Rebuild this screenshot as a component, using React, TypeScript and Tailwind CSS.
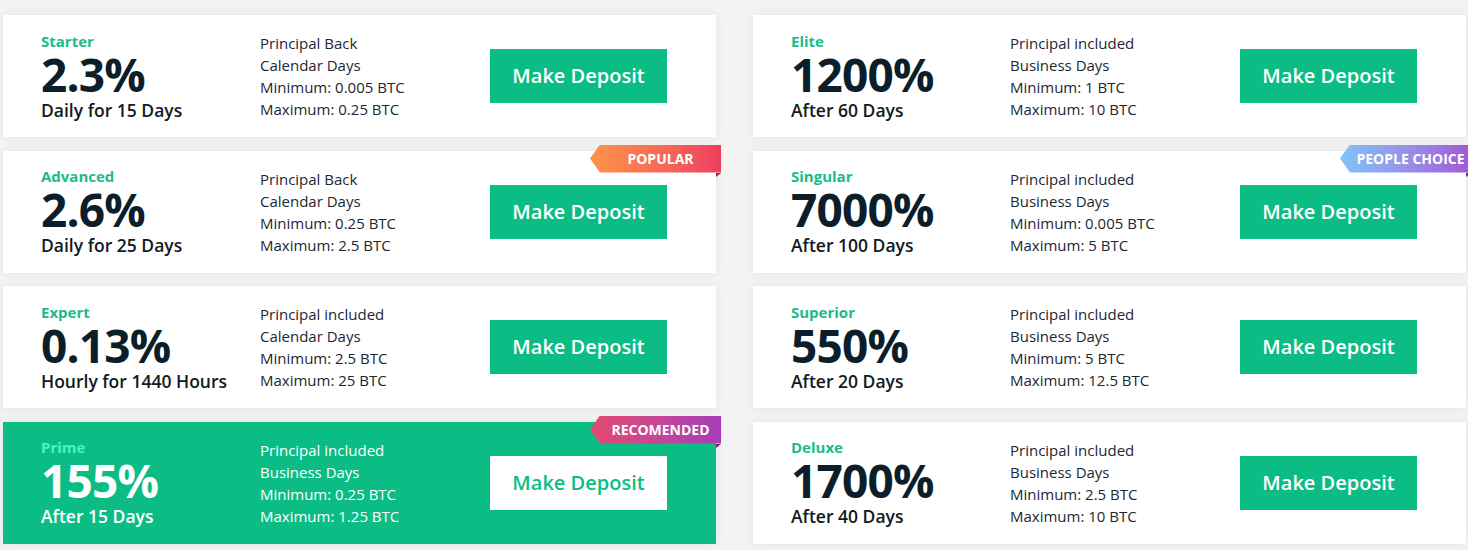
type Plan = {
  name: string;
  rate: string;
  term: string;
  principal: string;
  days: string;
  min: string;
  max: string;
  featured?: boolean;
  ribbon?: 'popular' | 'people' | 'recommended';
};

const LEFT: Plan[] = [
  { name: 'Starter', rate: '2.3%', term: 'Daily for 15 Days', principal: 'Principal Back', days: 'Calendar Days', min: '0.005 BTC', max: '0.25 BTC' },
  { name: 'Advanced', rate: '2.6%', term: 'Daily for 25 Days', principal: 'Principal Back', days: 'Calendar Days', min: '0.25 BTC', max: '2.5 BTC', ribbon: 'popular' },
  { name: 'Expert', rate: '0.13%', term: 'Hourly for 1440 Hours', principal: 'Principal included', days: 'Calendar Days', min: '2.5 BTC', max: '25 BTC' },
  { name: 'Prime', rate: '155%', term: 'After 15 Days', principal: 'Principal included', days: 'Business Days', min: '0.25 BTC', max: '1.25 BTC', featured: true, ribbon: 'recommended' },
];

const RIGHT: Plan[] = [
  { name: 'Elite', rate: '1200%', term: 'After 60 Days', principal: 'Principal included', days: 'Business Days', min: '1 BTC', max: '10 BTC' },
  { name: 'Singular', rate: '7000%', term: 'After 100 Days', principal: 'Principal included', days: 'Business Days', min: '0.005 BTC', max: '5 BTC', ribbon: 'people' },
  { name: 'Superior', rate: '550%', term: 'After 20 Days', principal: 'Principal included', days: 'Business Days', min: '5 BTC', max: '12.5 BTC' },
  { name: 'Deluxe', rate: '1700%', term: 'After 40 Days', principal: 'Principal included', days: 'Business Days', min: '2.5 BTC', max: '10 BTC' },
];

const RIBBON = {
  popular: { label: 'POPULAR', body: 'bg-gradient-to-r from-[#fd9447] to-[#ee3d5f]', fold: 'border-t-[#a3243c]' },
  people: { label: 'PEOPLE CHOICE', body: 'bg-gradient-to-r from-[#7cc5f6] to-[#a156d8]', fold: 'border-t-[#6c2f9a]' },
  recommended: { label: 'RECOMENDED', body: 'bg-gradient-to-r from-[#e4486c] to-[#a83bb8]', fold: 'border-t-[#7a1f6f]' },
};

function Ribbon({ kind }: { kind: keyof typeof RIBBON }) {
  const r = RIBBON[kind];
  return (
    <div className="absolute -right-[5px] -top-[6px]">
      <div
        className={
          'flex h-[28px] w-[131px] items-center justify-center pl-[10px] pb-px text-[14px] font-bold text-white [clip-path:polygon(10px_0,100%_0,100%_100%,10px_100%,0_50%)] ' +
          r.body
        }
      >
        {r.label}
      </div>
      <div
        className={
          'ml-auto h-0 w-0 border-t-[4px] border-r-[5px] border-r-transparent ' +
          r.fold
        }
      />
    </div>
  );
}

function PlanCard({ p }: { p: Plan }) {
  const f = p.featured;
  return (
    <div
      className={
        'relative flex h-[122px] items-center pl-[38px] shadow-[0_0_10px_rgba(0,0,0,0.07)] ' +
        (f ? 'bg-[#0bbd84]' : 'bg-white')
      }
    >
      <div className="w-[219px]">
        <div
          className={
            'text-[15px] font-bold leading-[20px] ' +
            (f ? 'text-[#48f3c6]' : 'text-[#1bbb88]')
          }
        >
          {p.name}
        </div>
        <div
          className={
            'text-[46px] font-bold leading-[46px] tracking-[-0.8px] ' +
            (f ? 'text-white' : 'text-[#0b1e29]')
          }
        >
          {p.rate}
        </div>
        <div
          className={
            'pt-px text-[17.5px] font-semibold leading-[24px] ' +
            (f ? 'text-white' : 'text-[#111a22]')
          }
        >
          {p.term}
        </div>
      </div>
      <div
        className={
          'w-[230px] text-[15px] leading-[22px] ' +
          (f ? 'text-white' : 'text-[#1c2733]')
        }
      >
        <div>{p.principal}</div>
        <div>{p.days}</div>
        <div>Minimum: {p.min}</div>
        <div>Maximum: {p.max}</div>
      </div>
      <button
        type="button"
        className={
          'flex h-[54px] w-[177px] items-center justify-center text-[20px] font-semibold ' +
          (f ? 'bg-white text-[#0bbd84]' : 'bg-[#0bbd84] text-white')
        }
      >
        Make Deposit
      </button>
      {p.ribbon && <Ribbon kind={p.ribbon} />}
    </div>
  );
}

export default function App() {
  return (
    <div className="h-[550px] w-[1468px] overflow-hidden bg-[#f3f3f3] font-['Open_Sans',sans-serif]">
      <div className="flex gap-[37px] pl-[3px] pt-[15px]">
        {[LEFT, RIGHT].map((col, i) => (
          <div key={i} className="flex w-[713px] flex-col gap-[13.5px]">
            {col.map((p) => (
              <PlanCard key={p.name} p={p} />
            ))}
          </div>
        ))}
      </div>
    </div>
  );
}
